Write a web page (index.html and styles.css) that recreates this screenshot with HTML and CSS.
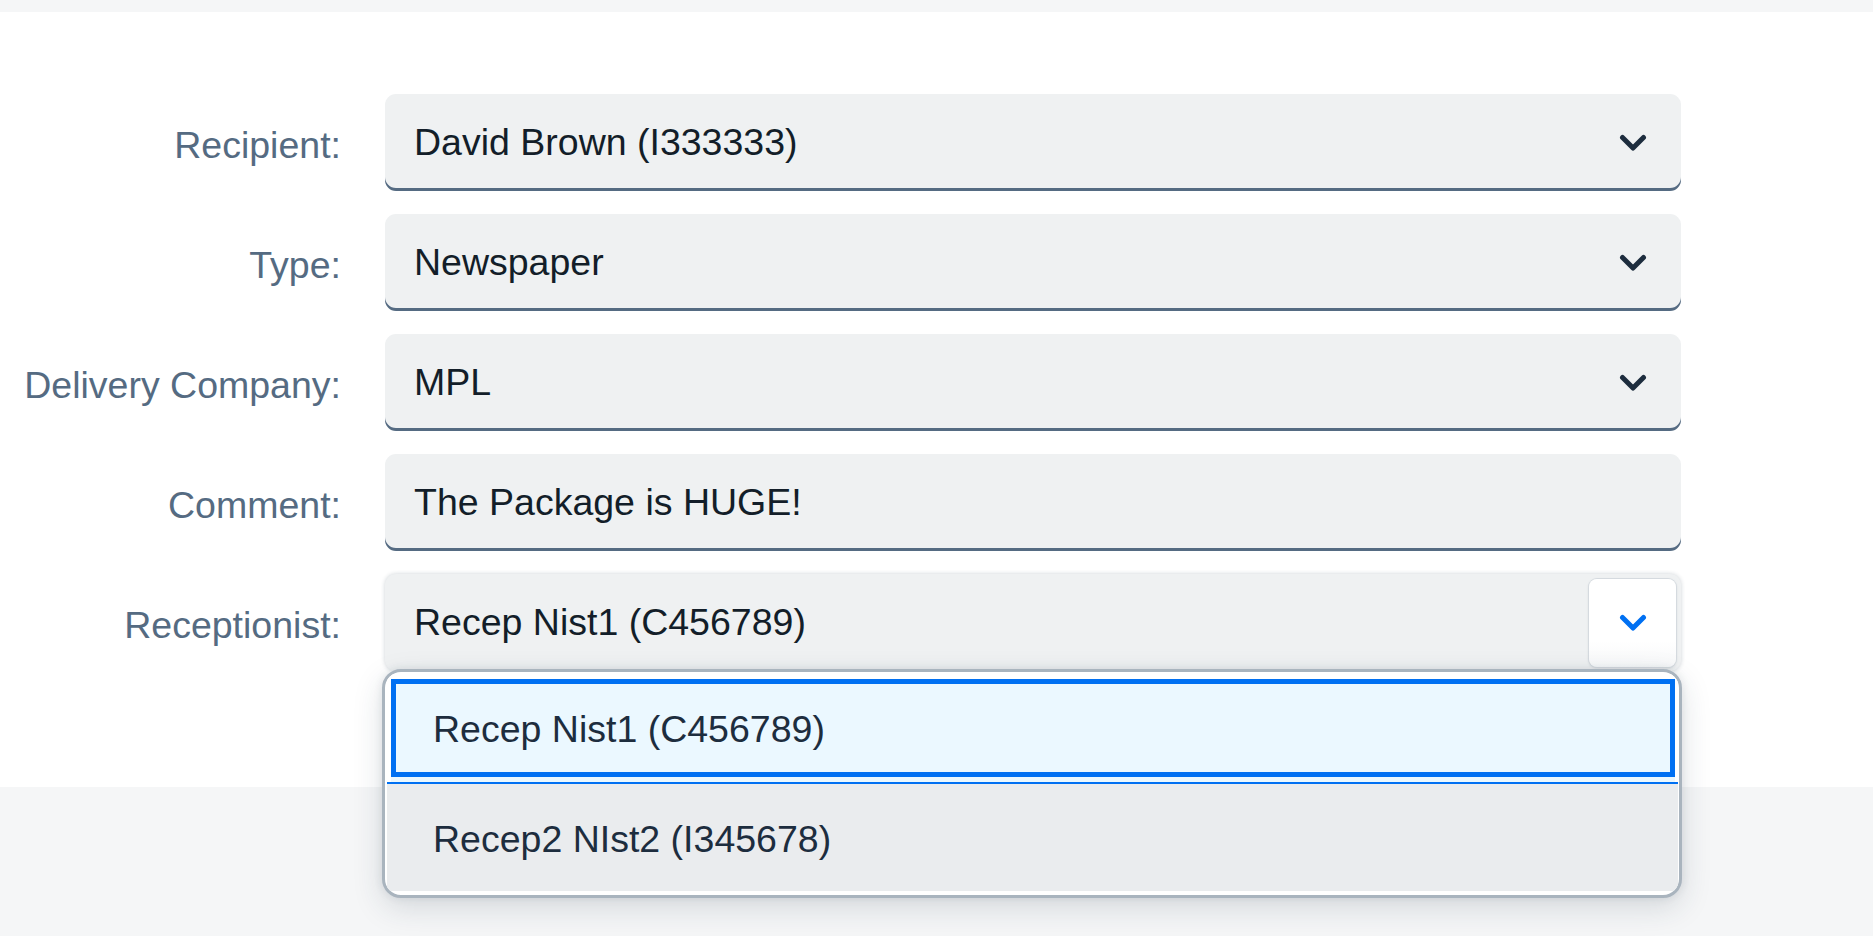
FILE: index.html
```html
<!DOCTYPE html>
<html lang="en">
<head>
<meta charset="utf-8">
<title>Mail Form</title>
<link rel="stylesheet" href="styles.css">
</head>
<body>
<div class="topbar"></div>
<main class="sheet">
  <form class="form">
    <label class="lbl">Recipient:</label>
    <div class="field">
      <span class="val">David Brown (I333333)</span>
      <span class="ico"><svg class="chev" width="28" height="19" viewBox="0 0 28 19"><polyline points="3.5,3.5 14,14 24.5,3.5"/></svg></span>
    </div>

    <label class="lbl">Type:</label>
    <div class="field">
      <span class="val">Newspaper</span>
      <span class="ico"><svg class="chev" width="28" height="19" viewBox="0 0 28 19"><polyline points="3.5,3.5 14,14 24.5,3.5"/></svg></span>
    </div>

    <label class="lbl">Delivery Company:</label>
    <div class="field">
      <span class="val">MPL</span>
      <span class="ico"><svg class="chev" width="28" height="19" viewBox="0 0 28 19"><polyline points="3.5,3.5 14,14 24.5,3.5"/></svg></span>
    </div>

    <label class="lbl">Comment:</label>
    <div class="field">
      <span class="val">The Package is HUGE!</span>
    </div>

    <label class="lbl">Receptionist:</label>
    <div class="field field-open">
      <span class="val">Recep Nist1 (C456789)</span>
      <span class="ico ico-open"><svg class="chev chev-blue" width="28" height="19" viewBox="0 0 28 19"><polyline points="3.5,3.5 14,14 24.5,3.5"/></svg></span>
      <div class="popover">
        <div class="opt-sel">
          <div class="opt-sel-inner">
            <div class="opt-sel-box">Recep Nist1 (C456789)</div>
          </div>
        </div>
        <div class="opt">Recep2 NIst2 (I345678)</div>
      </div>
    </div>
  </form>
</main>
</body>
</html>
```
FILE: styles.css
```css
html, body {
  margin: 0;
  padding: 0;
}
body {
  background: #f5f6f7;
  font-family: "Liberation Sans", Arial, sans-serif;
  width: 1873px;
  height: 936px;
  overflow: hidden;
}
.topbar {
  height: 12px;
}
.sheet {
  display: block;
  background: #ffffff;
  height: 775px;
  box-sizing: border-box;
  padding-top: 82px;
}
.form {
  display: grid;
  grid-template-columns: 341px 1296px;
  grid-auto-rows: 97px;
  column-gap: 44px;
  row-gap: 23px;
  margin: 0;
}
.lbl {
  display: flex;
  align-items: center;
  justify-content: flex-end;
  color: #556b82;
  font-size: 37.5px;
  line-height: 43px;
  padding-top: 5px;
  white-space: nowrap;
}
.field {
  position: relative;
  display: flex;
  align-items: center;
  background: #eff1f2;
  border-radius: 11px;
  box-shadow: inset 0 -3px 0 #556b82;
  padding-left: 29px;
}
.val {
  flex: 1;
  font-size: 37.5px;
  line-height: 43px;
  color: #131e29;
  padding-bottom: 1px;
  white-space: nowrap;
}
.ico {
  width: 87px;
  height: 88px;
  margin-right: 5px;
  display: flex;
  align-items: center;
  justify-content: center;
  border-radius: 8px;
  padding-top: 2px;
  box-sizing: border-box;
}
.chev polyline {
  fill: none;
  stroke: #1d2d3e;
  stroke-width: 5;
  stroke-linecap: round;
  stroke-linejoin: round;
}
.chev-blue polyline {
  stroke: #0070f2;
}
.field-open {
  box-shadow: 0 0 4px rgba(34, 53, 72, 0.22);
}
.ico-open {
  background: linear-gradient(#ffffff 70%, #f7f8f9);
  box-shadow: 0 0 0 1px #d5dadf, 0 1px 3px rgba(34, 53, 72, 0.18);
}
.popover {
  position: absolute;
  left: -3px;
  top: 95px;
  width: 1300px;
  box-sizing: border-box;
  border: 3px solid #a9b4be;
  border-radius: 19px;
  background: #ffffff;
  padding: 2px 1px 4px 2px;
  box-shadow: 0 10px 30px rgba(34, 53, 72, 0.15), 0 0 8px rgba(34, 53, 72, 0.1);
  overflow: hidden;
  z-index: 5;
}
.opt-sel {
  background: #ffffff;
  padding: 5px 3px 0 4px;
  border-bottom: 2px solid #0070f2;
}
.opt-sel-inner {
  background: #ebf8ff;
  padding-bottom: 5px;
}
.opt-sel-box {
  height: 98px;
  box-sizing: border-box;
  border: 5px solid #0070f2;
  display: flex;
  align-items: center;
  padding-left: 37px;
  padding-top: 2px;
  font-size: 37.5px;
  line-height: 43px;
  color: #1d2d3e;
  white-space: nowrap;
}
.opt {
  height: 107px;
  box-sizing: border-box;
  background: #eaecee;
  display: flex;
  align-items: center;
  padding-left: 46px;
  padding-top: 3px;
  font-size: 37.5px;
  line-height: 43px;
  color: #1d2d3e;
  white-space: nowrap;
}
```
